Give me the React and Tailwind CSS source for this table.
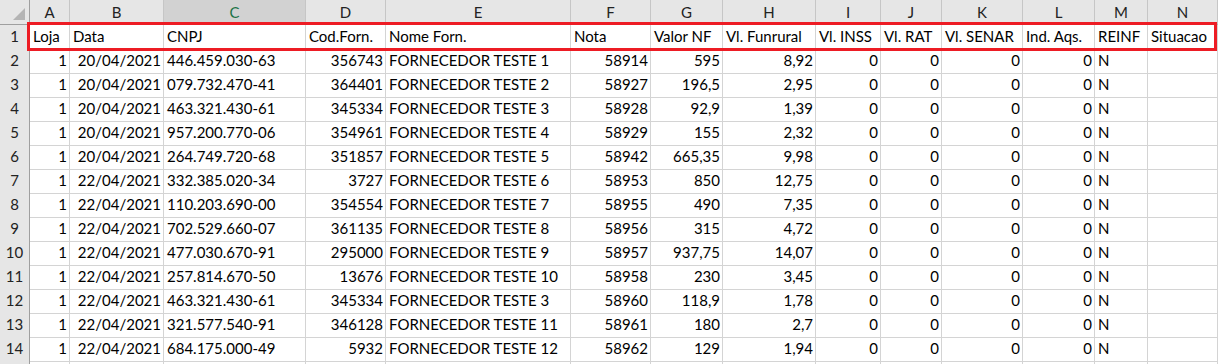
import React from 'react'

const cols = ['A', 'B', 'C', 'D', 'E', 'F', 'G', 'H', 'I', 'J', 'K', 'L', 'M', 'N']

const header = [
  'Loja', 'Data', 'CNPJ', 'Cod.Forn.', 'Nome Forn.', 'Nota', 'Valor NF',
  'Vl. Funrural', 'Vl. INSS', 'Vl. RAT', 'Vl. SENAR', 'Ind. Aqs.', 'REINF', 'Situacao',
]

// alinhamento por coluna: r = numero, l = texto
const align = ['r', 'r', 'l', 'r', 'l', 'r', 'r', 'r', 'r', 'r', 'r', 'r', 'l', 'l']

const rows = [
  ['1', '20/04/2021', '446.459.030-63', '356743', 'FORNECEDOR TESTE 1', '58914', '595', '8,92'],
  ['1', '20/04/2021', '079.732.470-41', '364401', 'FORNECEDOR TESTE 2', '58927', '196,5', '2,95'],
  ['1', '20/04/2021', '463.321.430-61', '345334', 'FORNECEDOR TESTE 3', '58928', '92,9', '1,39'],
  ['1', '20/04/2021', '957.200.770-06', '354961', 'FORNECEDOR TESTE 4', '58929', '155', '2,32'],
  ['1', '20/04/2021', '264.749.720-68', '351857', 'FORNECEDOR TESTE 5', '58942', '665,35', '9,98'],
  ['1', '22/04/2021', '332.385.020-34', '3727', 'FORNECEDOR TESTE 6', '58953', '850', '12,75'],
  ['1', '22/04/2021', '110.203.690-00', '354554', 'FORNECEDOR TESTE 7', '58955', '490', '7,35'],
  ['1', '22/04/2021', '702.529.660-07', '361135', 'FORNECEDOR TESTE 8', '58956', '315', '4,72'],
  ['1', '22/04/2021', '477.030.670-91', '295000', 'FORNECEDOR TESTE 9', '58957', '937,75', '14,07'],
  ['1', '22/04/2021', '257.814.670-50', '13676', 'FORNECEDOR TESTE 10', '58958', '230', '3,45'],
  ['1', '22/04/2021', '463.321.430-61', '345334', 'FORNECEDOR TESTE 3', '58960', '118,9', '1,78'],
  ['1', '22/04/2021', '321.577.540-91', '346128', 'FORNECEDOR TESTE 11', '58961', '180', '2,7'],
  ['1', '22/04/2021', '684.175.000-49', '5932', 'FORNECEDOR TESTE 12', '58962', '129', '1,94'],
].map((r) => [...r, '0', '0', '0', '0', 'N', ''])

const gridCols =
  'grid grid-cols-[30px_40px_94px_142px_80px_185px_80px_72px_93px_65px_61px_81px_72px_53px_1fr]'

export default function App() {
  return (
    <div
      className="relative w-[1218px] h-[364px] overflow-hidden bg-white text-black text-[15px]"
      style={{ fontFamily: 'Lato, "Liberation Sans", sans-serif' }}
    >
      {/* letras das colunas */}
      <div className={`${gridCols} h-[25px]`}>
        <div className="relative bg-[#e6e6e6] border-r border-b border-[#9f9f9f]">
          <svg className="absolute right-[4px] bottom-[4px]" width="12" height="12" viewBox="0 0 12 12">
            <polygon points="12,0 12,12 0,12" fill="#b4b4b4" />
          </svg>
        </div>
        {cols.map((c) => (
          <div
            key={c}
            className={`flex items-center justify-center border-r border-b border-r-[#c6c6c6] border-b-[#9f9f9f] ${
              c === 'C' ? 'bg-[#d2d2d2] text-[#217346]' : 'bg-[#e6e6e6] text-[#222]'
            }`}
          >
            {c}
          </div>
        ))}
      </div>

      <Row n={1} cells={header} head />
      {rows.map((r, i) => (
        <Row key={i} n={i + 2} cells={r} />
      ))}
      {/* linha 15, so aparece a borda de cima */}
      <Row n="" cells={Array(14).fill('')} />

      {/* destaque vermelho da linha 1 */}
      <div className="absolute left-[27px] top-[22px] w-[1190px] h-[29px] border-[3px] border-[#ed1c24] pointer-events-none" />
    </div>
  )
}

function Row({ n, cells, head }) {
  return (
    <div className={`${gridCols} h-[24px]`}>
      <div className="flex items-end justify-center pb-[1px] bg-[#e6e6e6] border-r border-b border-r-[#9f9f9f] border-b-[#c6c6c6] text-[#222]">
        {n}
      </div>
      {cells.map((v, i) => (
        <div
          key={i}
          className={`flex items-end pb-[1px] overflow-hidden whitespace-nowrap border-r border-b border-[#d4d4d4] ${
            head || align[i] === 'l' ? 'justify-start pl-[3px]' : 'justify-end pr-[2px]'
          }`}
        >
          {v}
        </div>
      ))}
    </div>
  )
}
